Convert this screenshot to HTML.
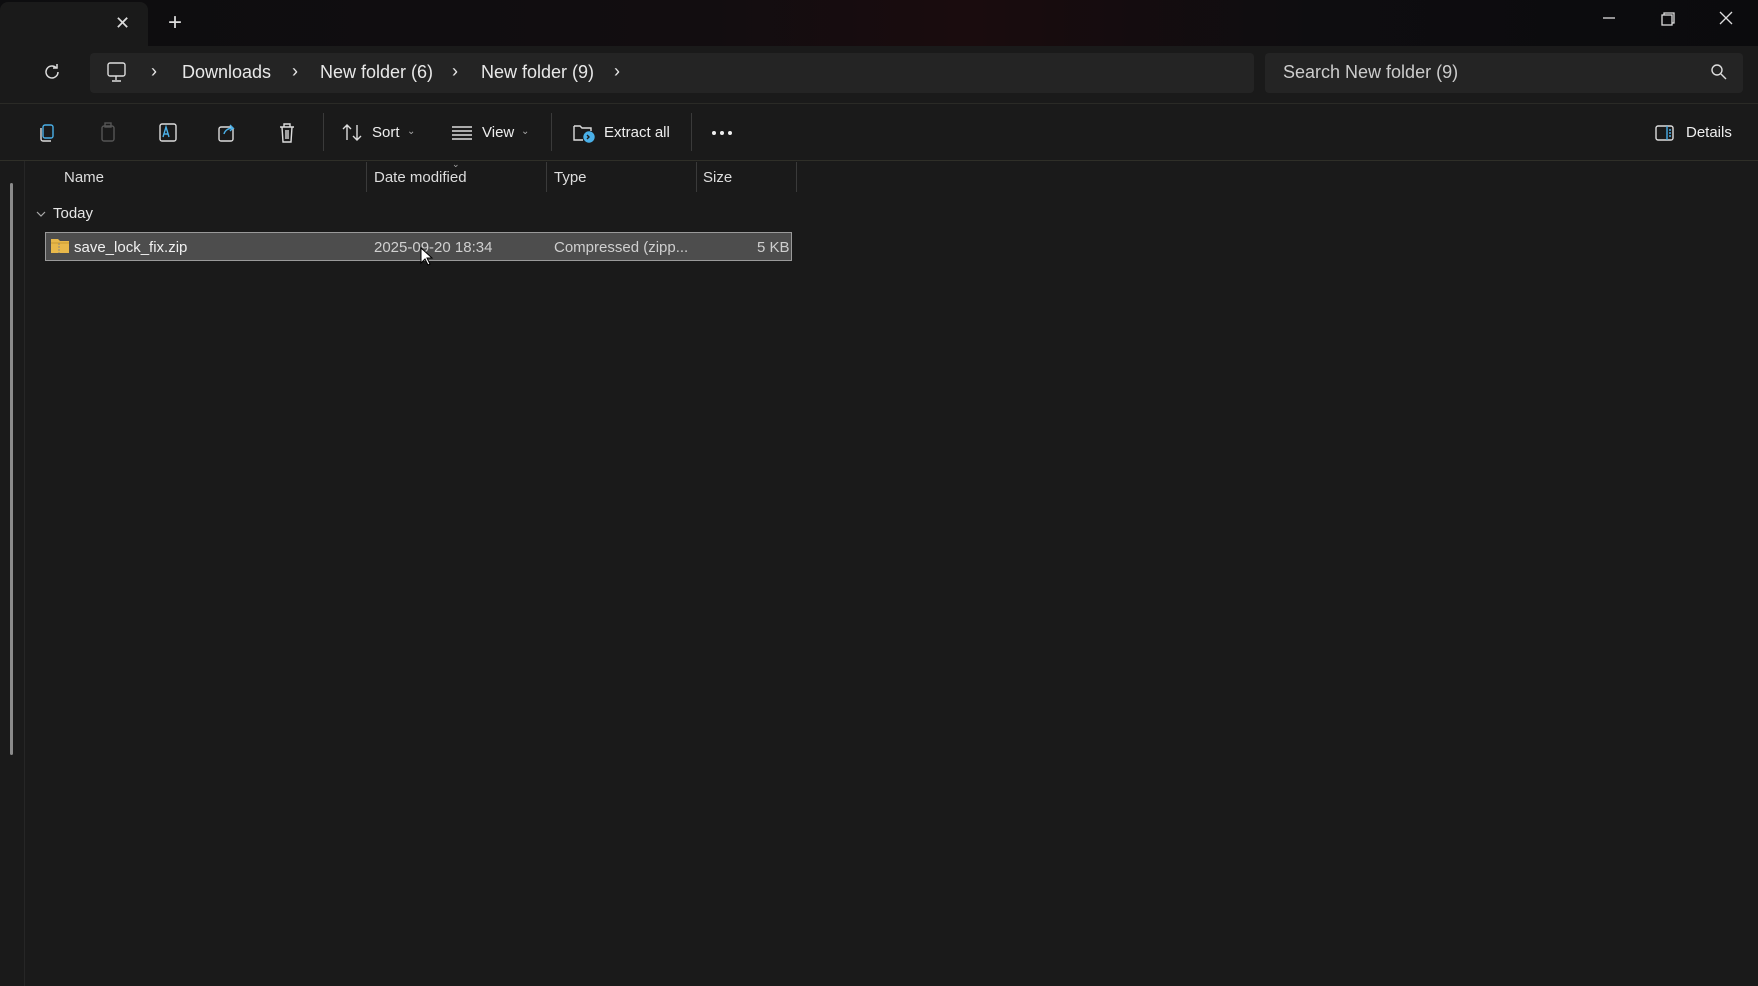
<!DOCTYPE html>
<html><head><meta charset="utf-8"><style>
*{margin:0;padding:0;box-sizing:border-box}
body{width:1758px;height:986px;overflow:hidden;background:#1a1a1a;font-family:"Segoe UI","Liberation Sans",sans-serif;color:#fff;position:relative}
.abs{position:absolute}
.tabbar{left:0;top:0;width:1758px;height:46px;background:linear-gradient(90deg,#0d0d0f 0%,#120d10 40%,#1a0c0e 55%,#0e0d10 75%,#0b0b0d 100%)}
.tab{left:0;top:2px;width:148px;height:44px;background:#1a1a1a;border-radius:8px 8px 0 0}
.nav{left:0;top:46px;width:1758px;height:57px;background:#1a1a1a}
.addr{left:90px;top:53px;width:1164px;height:40px;background:#242424;border-radius:4px}
.search{left:1265px;top:53px;width:478px;height:40px;background:#242424;border-radius:4px}
.t{font-size:18px;color:#e8e8e8;white-space:nowrap}
.tool{left:0;top:103px;width:1758px;height:58px;background:#1a1a1a;border-top:1px solid #2a2a26;border-bottom:1px solid #2f2f28}
.sep{width:1px;height:38px;background:#3a3a3a;top:113px}
.ts{font-size:15px;color:#eee}
.hdr{font-size:15px;color:#ddd}
.col{width:1px;height:30px;top:162px;background:#3a3a3a}
</style></head><body>
<div class="abs tabbar"></div>
<div class="abs tab"></div>
<div class="abs" style="left:115px;top:13px;font-size:18px;color:#ddd">✕</div>
<div class="abs" style="left:168px;top:9px;font-size:24px;color:#ddd">+</div>
<svg class="abs" style="left:1600px;top:10px" width="150" height="30" fill="none" stroke="#ddd" stroke-width="1.3">
<line x1="3" y1="8" x2="15" y2="8"/><rect x="62" y="5" width="10" height="10"/><path d="M64 5V3h10v10h-2"/><path d="M120 2l12 12M132 2l-12 12"/></svg>
<div class="abs nav"></div>
<svg class="abs" style="left:42px;top:62px" width="20" height="20" fill="none" stroke="#ddd" stroke-width="1.5"><path d="M16 10a6 6 0 1 1-2-4.5"/><path d="M15 2v4h-4"/></svg>
<div class="abs addr"></div>
<svg class="abs" style="left:106px;top:61px" width="22" height="22" fill="none" stroke="#ddd" stroke-width="1.4"><rect x="2" y="2" width="17" height="13" rx="2"/><path d="M10 15v4M6 20h9"/></svg>
<div class="abs t" style="left:151px;top:61px">›</div>
<div class="abs t" style="left:182px;top:62px">Downloads</div>
<div class="abs t" style="left:292px;top:61px">›</div>
<div class="abs t" style="left:320px;top:62px">New folder (6)</div>
<div class="abs t" style="left:452px;top:61px">›</div>
<div class="abs t" style="left:481px;top:62px">New folder (9)</div>
<div class="abs t" style="left:614px;top:61px">›</div>
<div class="abs search"></div>
<div class="abs t" style="left:1283px;top:62px;color:#ccc">Search New folder (9)</div>
<svg class="abs" style="left:1710px;top:63px" width="18" height="18" fill="none" stroke="#ddd" stroke-width="1.4"><circle cx="7" cy="7" r="5"/><path d="M11 11l5 5"/></svg>
<div class="abs tool"></div>
<svg class="abs" style="left:38px;top:122px" width="270" height="22" fill="none" stroke-width="1.4">
<rect x="5" y="3" width="10" height="13" rx="2" stroke="#4ab0e8"/><path d="M3 6v11a2 2 0 0 0 2 2h8" stroke="#ddd"/>
<rect x="64" y="4" width="12" height="15" rx="2" stroke="#555"/><rect x="67" y="1" width="6" height="4" stroke="#555"/>
<rect x="122" y="2" width="16" height="17" rx="2" stroke="#ddd"/><path d="M125 15l3-10 3 10M126 12h4" stroke="#4ab0e8"/>
<rect x="181" y="5" width="14" height="14" rx="2" stroke="#ddd"/><path d="M186 12c1-4 5-6 9-6l-3-3m3 3l-3 3" stroke="#4ab0e8"/>
<path d="M242 5h14M246 5V2h6v3M244 5l1 15h8l1-15M248 8v9M250 8v9" stroke="#ddd"/></svg>
<div class="abs sep" style="left:323px"></div>
<svg class="abs" style="left:342px;top:123px" width="22" height="20" fill="none" stroke="#ddd" stroke-width="1.4"><path d="M5 17V2M1 6l4-4 4 4M15 2v15M11 13l4 4 4-4"/></svg>
<div class="abs ts" style="left:372px;top:124px">Sort</div>
<div class="abs" style="left:407px;top:126px;font-size:10px;color:#aaa">⌄</div>
<svg class="abs" style="left:452px;top:125px" width="20" height="16" stroke="#ddd" stroke-width="1.4"><path d="M0 2h20M0 6h20M0 10h20M0 14h20"/></svg>
<div class="abs ts" style="left:482px;top:124px">View</div>
<div class="abs" style="left:521px;top:126px;font-size:10px;color:#aaa">⌄</div>
<div class="abs sep" style="left:551px"></div>
<svg class="abs" style="left:572px;top:122px" width="24" height="22" fill="none" stroke-width="1.4"><path d="M2 4h6l2 2h9v3M2 4v14h9" stroke="#ddd"/><circle cx="17" cy="15" r="5" fill="#4ab0e8" stroke="#4ab0e8"/><path d="M15 13l2 2-2 2" stroke="#1b1b1b"/></svg>
<div class="abs ts" style="left:604px;top:124px">Extract all</div>
<div class="abs sep" style="left:691px"></div>
<svg class="abs" style="left:711px;top:130px" width="22" height="6" fill="#eee"><circle cx="3" cy="3" r="2"/><circle cx="11" cy="3" r="2"/><circle cx="19" cy="3" r="2"/></svg>
<svg class="abs" style="left:1655px;top:124px" width="20" height="18" fill="none" stroke-width="1.4"><rect x="1" y="2" width="17" height="14" rx="2" stroke="#ddd"/><path d="M12 2v14" stroke="#4ab0e8"/><path d="M14 6h2M14 9h2M14 12h2" stroke="#4ab0e8"/></svg>
<div class="abs ts" style="left:1686px;top:124px">Details</div>
<div class="abs" style="left:24px;top:161px;width:1px;height:825px;background:#262626"></div>
<div class="abs" style="left:10px;top:183px;width:3px;height:572px;background:#8a8a8a;border-radius:2px"></div>
<div class="abs hdr" style="left:64px;top:169px">Name</div>
<div class="abs col" style="left:366px"></div>
<div class="abs" style="left:452px;top:159px;font-size:9px;color:#aaa">⌄</div>
<div class="abs hdr" style="left:374px;top:169px">Date modified</div>
<div class="abs col" style="left:546px"></div>
<div class="abs hdr" style="left:554px;top:169px">Type</div>
<div class="abs col" style="left:696px"></div>
<div class="abs hdr" style="left:703px;top:169px">Size</div>
<div class="abs col" style="left:796px"></div>
<svg class="abs" style="left:36px;top:210px" width="10" height="8" fill="none" stroke="#aaa" stroke-width="1.2"><path d="M1 2l4 4 4-4"/></svg>
<div class="abs" style="left:53px;top:205px;font-size:15px;color:#e6e6e6">Today</div>
<div class="abs" style="left:45px;top:232px;width:747px;height:29px;background:#4d4d4d;border:1px solid #9a9a9a"></div>
<svg class="abs" style="left:51px;top:238px" width="18" height="15"><path d="M0 1h7l2 2h9v12H0z" fill="#e8b84a"/><path d="M0 5h18" stroke="#c79a32"/><path d="M8 5v10" stroke="#888" stroke-dasharray="2 1"/></svg>
<div class="abs" style="left:74px;top:239px;font-size:15px;color:#f0f0f0">save_lock_fix.zip</div>
<div class="abs" style="left:374px;top:239px;font-size:15px;color:#cfcfcf">2025-09-20 18:34</div>
<div class="abs" style="left:554px;top:239px;font-size:15px;color:#cfcfcf">Compressed (zipp...</div>
<div class="abs" style="left:757px;top:239px;font-size:15px;color:#cfcfcf">5 KB</div>
<svg class="abs" style="left:420px;top:247px" width="14" height="20"><path d="M1 1v15l4-4 3 6 2-1-3-6h5z" fill="#fff" stroke="#000"/></svg>
</body></html>
